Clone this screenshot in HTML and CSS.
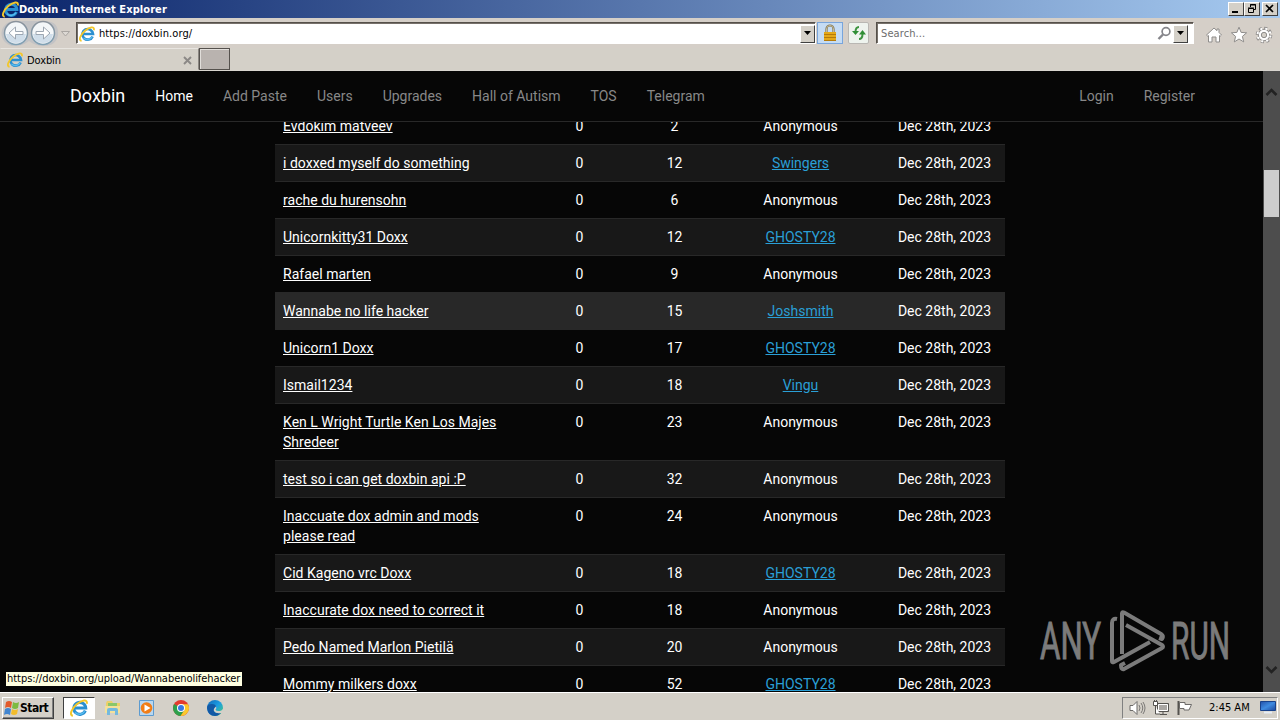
FILE: index.html
```
<!DOCTYPE html>
<html lang="en">
<head>
    <meta charset="UTF-8">
    <title>Doxbin - Internet Explorer</title>
    <link rel="stylesheet" href="styles.css">
</head>
<body>
    <svg class="defs" width="0" height="0">
        <linearGradient id="ring" x1="0" y1="0" x2="0" y2="1">
            <stop offset="0" stop-color="#8a929b"/>
            <stop offset="1" stop-color="#7fa0b4"/>
        </linearGradient>
        <linearGradient id="screen" x1="0" y1="0" x2="1" y2="1">
            <stop offset="0" stop-color="#2350a8"/>
            <stop offset="0.5" stop-color="#3f8be0"/>
            <stop offset="1" stop-color="#1c479c"/>
        </linearGradient>
        <linearGradient id="edge" x1="0" y1="0" x2="1" y2="1">
            <stop offset="0" stop-color="#1468b8"/>
            <stop offset="0.5" stop-color="#1b9de2"/>
            <stop offset="1" stop-color="#4fd26a"/>
        </linearGradient>
        <symbol id="ie" viewBox="0 0 16 16">
            <path d="M13.6 10.4a5.3 5.3 0 1 1 .4-2.4H4.4" fill="none" stroke="#2a8fd0" stroke-width="2.7"/>
            <path d="M13 10.9a5.3 5.3 0 0 1-8.5 1" fill="none" stroke="#58bdf0" stroke-width="1.3"/>
            <path d="M2.6 14.8C-1 14.5 1.5 8.5 6 4.7 10.5 1 15.8-.3 14.9 4.2" fill="none" stroke="#f3c72b" stroke-width="1.8"/>
        </symbol>
    </svg>

    <div class="titlebar">
        <svg width="17" height="17"><use href="#ie"/></svg>
        <span class="title-text">Doxbin - Internet Explorer</span>
        <div class="win-buttons">
            <span class="win-btn"><svg width="14" height="11"><path d="M3 8h6v2H3z"/></svg></span>
            <span class="win-btn"><svg width="14" height="11"><path d="M5.5 4V1.5h5v5H9M5 2h6M3.5 5.5h5v4h-5zM3 5h6" fill="none" stroke="#000"/></svg></span>
            <span class="win-btn close"><svg width="14" height="11"><path d="M3 2l7 7M10 2L3 9" stroke="#000" stroke-width="1.7"/></svg></span>
        </div>
    </div>

    <div class="toolbar">
        <svg class="nav-buttons" width="74" height="30">
            <path d="M14 3h31q14 0 13 14-2 11-14 11-9 0-15-5-6 5-15 5A12 12 0 0 1 14 3z" fill="#c3c3c5"/>
            <circle cx="16" cy="15" r="11.5" fill="#f3f6f8" stroke="url(#ring)" stroke-width="1.5"/>
            <circle cx="43" cy="15" r="11.5" fill="#f3f6f8" stroke="url(#ring)" stroke-width="1.5"/>
            <path d="M6 16h20q-1 9-10 9T6 16zM33 16h20q-1 9-10 9t-10-9z" fill="#d0deea"/>
            <path d="M15.5 9L9 15l6.5 6v-4.500H23v-3h-7.500zM43.500 9l6.500 6-6.500 6v-4.500H36v-3h7.500z" fill="#fff" stroke="#9da7b2"/>
            <path d="M61.500 13.500h8L65.500 18z" fill="#ddd9d4" stroke="#aaa6a2"/>
        </svg>
        <div class="field address">
            <svg width="16" height="16"><use href="#ie"/></svg>
            <span class="url">https://doxbin.org/</span>
            <span class="drop"><svg width="9" height="5"><path d="M1 0h7L4.500 4z"/></svg></span>
        </div>
        <span class="tool lock">
            <svg width="16" height="18">
                <path d="M4.500 9V5a3.500 3.500 0 0 1 7 0v4" fill="none" stroke="#7d7150" stroke-width="2.200"/>
                <path d="M4.500 9V5a3.500 3.500 0 0 1 7 0v4" fill="none" stroke="#d8cfa8" stroke-width=".8"/>
                <path d="M2 8h12v9H2z" fill="#e5a919"/>
                <path d="M2 10.500h12M2 13.500h12M2 16.500h12" stroke="#b57b0a"/>
            </svg>
        </span>
        <span class="tool refresh">
            <svg width="16" height="16">
                <path d="M8 2Q4.500 2 4.500 7M8 14q3.500 0 3.500-5" fill="none" stroke="#3d9440" stroke-width="2"/>
                <path d="M1 6h7l-3.500 4zM8 9.500h7L11.500 5z" fill="#2f8e35"/>
            </svg>
        </span>
        <div class="field search">
            <span class="placeholder">Search...</span>
            <svg width="15" height="15"><circle cx="9" cy="5.500" r="3.900" fill="none" stroke="#85858a" stroke-width="1.700"/><path d="M6 8.500L1.500 13" stroke="#85858a" stroke-width="2.400"/></svg>
            <span class="drop"><svg width="9" height="5"><path d="M1 0h7L4.500 4z"/></svg></span>
        </div>
        <div class="commands">
            <svg width="18" height="18"><path d="M1.500 9L9 2l3 2.700V3h2v3.500L16.500 9l-1.300 1.200-.7-.6V16H11v-5H7v5H3.500V9.600l-.7.600z" fill="#fff" stroke="#8f8d8b"/></svg>
            <svg width="18" height="18"><path d="M9 1.200l2.100 5.200 5.500.4-4.200 3.600 1.300 5.500L9 13l-4.700 2.900 1.300-5.500L1.400 6.800l5.500-.4z" fill="#fff" stroke="#8f8d8b"/></svg>
            <svg width="18" height="18"><circle cx="9" cy="9" r="6.800" fill="none" stroke="#8f8d8b" stroke-width="3" stroke-dasharray="3 2.340"/><circle cx="9" cy="9" r="5.700" fill="#fff" stroke="#8f8d8b"/><circle cx="9" cy="9" r="6.500" fill="none" stroke="#fff" stroke-width="2" stroke-dasharray="2 3.105" stroke-dashoffset="-.5"/><circle cx="9" cy="9" r="2.700" fill="#d4d0c8" stroke="#8f8d8b"/></svg>
        </div>
    </div>

    <div class="tabs">
        <div class="tab">
            <svg width="16" height="16"><use href="#ie"/></svg>
            <span>Doxbin</span>
            <svg class="tab-close" width="9" height="9"><path d="M1 1l7 7M8 1L1 8" stroke="#8b8886" stroke-width="1.900"/></svg>
        </div>
        <div class="new-tab"></div>
    </div>

    <div class="viewport">
        <div class="page">
            <nav class="navbar">
                <a class="brand">Doxbin</a>
                <a class="active">Home</a>
                <a>Add Paste</a>
                <a>Users</a>
                <a>Upgrades</a>
                <a>Hall of Autism</a>
                <a>TOS</a>
                <a>Telegram</a>
                <a class="right">Login</a>
                <a>Register</a>
            </nav>
            <table class="pastes">
                <colgroup>
                    <col class="col-title"><col class="col-comments"><col class="col-views"><col class="col-user"><col class="col-date">
                </colgroup>
                <tbody>
                    <tr><td><a>Evdokim matveev</a></td><td>0</td><td>2</td><td>Anonymous</td><td>Dec 28th, 2023</td></tr>
                    <tr><td><a>i doxxed myself do something</a></td><td>0</td><td>12</td><td><a class="user">Swingers</a></td><td>Dec 28th, 2023</td></tr>
                    <tr><td><a>rache du hurensohn</a></td><td>0</td><td>6</td><td>Anonymous</td><td>Dec 28th, 2023</td></tr>
                    <tr><td><a>Unicornkitty31 Doxx</a></td><td>0</td><td>12</td><td><a class="user">GHOSTY28</a></td><td>Dec 28th, 2023</td></tr>
                    <tr><td><a>Rafael marten</a></td><td>0</td><td>9</td><td>Anonymous</td><td>Dec 28th, 2023</td></tr>
                    <tr class="hover"><td><a>Wannabe no life hacker</a></td><td>0</td><td>15</td><td><a class="user">Joshsmith</a></td><td>Dec 28th, 2023</td></tr>
                    <tr><td><a>Unicorn1 Doxx</a></td><td>0</td><td>17</td><td><a class="user">GHOSTY28</a></td><td>Dec 28th, 2023</td></tr>
                    <tr><td><a>Ismail1234</a></td><td>0</td><td>18</td><td><a class="user">Vingu</a></td><td>Dec 28th, 2023</td></tr>
                    <tr><td><a>Ken L Wright Turtle Ken Los Majes<br>Shredeer</a></td><td>0</td><td>23</td><td>Anonymous</td><td>Dec 28th, 2023</td></tr>
                    <tr><td><a>test so i can get doxbin api :P</a></td><td>0</td><td>32</td><td>Anonymous</td><td>Dec 28th, 2023</td></tr>
                    <tr><td><a>Inaccuate dox admin and mods<br>please read</a></td><td>0</td><td>24</td><td>Anonymous</td><td>Dec 28th, 2023</td></tr>
                    <tr><td><a>Cid Kageno vrc Doxx</a></td><td>0</td><td>18</td><td><a class="user">GHOSTY28</a></td><td>Dec 28th, 2023</td></tr>
                    <tr><td><a>Inaccurate dox need to correct it</a></td><td>0</td><td>18</td><td>Anonymous</td><td>Dec 28th, 2023</td></tr>
                    <tr><td><a>Pedo Named Marlon Pietilä</a></td><td>0</td><td>20</td><td>Anonymous</td><td>Dec 28th, 2023</td></tr>
                    <tr><td><a>Mommy milkers doxx</a></td><td>0</td><td>52</td><td><a class="user">GHOSTY28</a></td><td>Dec 28th, 2023</td></tr>
                </tbody>
            </table>
        </div>
        <div class="scrollbar">
            <svg width="17" height="12"><path d="M3.500 9L8.500 4l5 5" fill="none" stroke="#222" stroke-width="2.600"/></svg>
            <div class="thumb"></div>
            <svg class="down" width="17" height="12"><path d="M3.500 3l5 5 5-5" fill="none" stroke="#222" stroke-width="2.600"/></svg>
        </div>
        <div class="status">https://doxbin.org/upload/Wannabenolifehacker</div>
        <div class="watermark">
            <svg width="206" height="68">
                <text x="2" y="50" textLength="61" lengthAdjust="spacingAndGlyphs">ANY</text>
                <text x="133" y="50" textLength="59" lengthAdjust="spacingAndGlyphs">RUN</text>
                <g fill="none" stroke="#7b7b7b" stroke-width="4" stroke-linejoin="round">
                    <path d="M84 45V4.500q0-2 2-1L123 25q3 2 1 5l-3-1"/>
                    <path d="M79 10q-5-1-5 4v38q0 2 2 1l36-20"/>
                    <path d="M88 16l36 20q2 2 0 3L86 60q-3 1-3-4l4-2"/>
                </g>
            </svg>
        </div>
    </div>

    <div class="taskbar">
        <div class="start">
            <svg width="17" height="16">
                <path d="M3 2q3-2 6 0L8 8Q5 6 2 8z" fill="#e25b2c"/>
                <path d="M10 2q3 2 6 0l-1 6q-3 2-6 0z" fill="#7dbb42"/>
                <path d="M2 9q3-2 6 0l-1 6q-3-2-6 0z" fill="#4286d0"/>
                <path d="M9 9q3 2 6 0l-1 5q-3 2-6 0z" fill="#f2bd2d"/>
            </svg>
            <span>Start</span>
        </div>
        <div class="task current"><svg width="18" height="18"><use href="#ie"/></svg></div>
        <div class="task">
            <svg width="18" height="18">
                <path d="M2 4l1-2h5l1 2h7v8H2z" fill="#ecd069"/>
                <path d="M4 4h9v3H4z" fill="#8ac76a"/>
                <path d="M1 7h15v7H1z" fill="#f4e19a"/>
                <path d="M3 16v-5q0-2 2-2h7q2 0 2 2v5h-3v-4H6v4z" fill="#74b9de"/>
            </svg>
        </div>
        <div class="task">
            <svg width="18" height="18">
                <path d="M1.500 1.500h14v15h-14z" fill="#b9d7ef" stroke="#5c9bd0"/>
                <circle cx="8.500" cy="9" r="5.800" fill="#f17d16"/>
                <path d="M6.500 5.500v7l6-3.500z" fill="#fff"/>
            </svg>
        </div>
        <div class="task">
            <svg width="18" height="18">
                <circle cx="9" cy="9" r="8" fill="#e33b2e"/>
                <path d="M9 9L2.100 5A8 8 0 0 0 8.500 17l4-6z" fill="#2da04c"/>
                <path d="M9 5.200h7A8 8 0 0 1 8.500 17l4-6z" fill="#fbc92d"/>
                <circle cx="9" cy="9" r="4" fill="#fff"/>
                <circle cx="9" cy="9" r="3" fill="#3979e2"/>
            </svg>
        </div>
        <div class="task">
            <svg width="18" height="18">
                <circle cx="9" cy="9" r="8" fill="url(#edge)"/>
                <path d="M1 9q0-4 5-4 4 0 4 3l-2 2q-1 4 4 4 2 0 3.500-1Q13 17 9 17 2 17 1 9z" fill="#1359a5"/>
                <path d="M10 7.500q1 2-.5 3 .5 2 4.500 1.500 2-.3 3-2l1 5-3-1q-5 1-7-2-1-2 2-4.500z" fill="#d4d0c8"/>
            </svg>
        </div>
        <div class="tray">
            <svg width="18" height="18"><path d="M2 6.500h3l4-4v13l-4-4H2z" fill="#fff" stroke="#6d6b69"/><path d="M11 6q2 3 0 6M13 4q3.500 5 0 10M15 3q4 6 0 12" fill="none" stroke="#7b7977"/></svg>
            <svg width="18" height="18"><path d="M5.500 4.500h11v8h-11z" fill="#aaa7a3" stroke="#55534f"/><path d="M6.500 5.500h9v6h-9z" fill="none" stroke="#fff"/><path d="M8 15.500h7M11 13v2" stroke="#55534f"/><path d="M1.500 2.500h4v4h-4zM3.500 7v8H8M2.500 1v2M4.500 1v2" fill="#fff" stroke="#55534f"/></svg>
            <svg width="18" height="18"><path d="M2.500 2v14" stroke="#55534f" stroke-width="2"/><path d="M3.500 3.500H9v2h6.500L13 11H8V9.500H3.500z" fill="#fff" stroke="#6d6b69"/></svg>
            <span class="clock">2:45 AM</span>
            <svg class="desktop" width="16" height="13"><path d="M.5.5h15v9H.5z" fill="url(#screen)" stroke="#19428b"/><path d="M4 11.500h8" stroke="#e6edf5" stroke-width="2"/></svg>
        </div>
    </div>
</body>
</html>
```

FILE: styles.css
```
* {
    box-sizing: border-box;
    margin: 0;
    padding: 0;
}
body {
    width: 1280px;
    height: 720px;
    overflow: hidden;
    display: flex;
    flex-direction: column;
    background: #d4d0c8;
    font-family: "DejaVu Sans Condensed", "DejaVu Sans", sans-serif;
    font-size: 11px;
    color: #000;
    white-space: nowrap;
}
svg {
    display: block;
    flex: none;
}
.defs {
    position: absolute;
}

/* window frame */
.titlebar {
    height: 18px;
    flex: none;
    display: flex;
    align-items: center;
    padding: 0 2px;
    background: linear-gradient(to right, #0a246a, #a6caf0);
    color: #fff;
    font-weight: bold;
}
.title-text {
    letter-spacing: 0.08px;
}
.win-buttons {
    margin-left: auto;
    display: flex;
}
.win-btn {
    width: 16px;
    height: 14px;
    background: #d4d0c8;
    border: 1px solid;
    border-color: #fff #404040 #404040 #fff;
}
.close {
    margin-left: 2px;
}
.toolbar {
    height: 30px;
    flex: none;
    display: flex;
    align-items: center;
    background: #d5cfc8;
}
.field {
    height: 22px;
    display: flex;
    align-items: center;
    background: #fff;
    border: 1px solid;
    border-color: #55504a #fff #fff #55504a;
    box-shadow: inset 1px 1px #77716b;
}
.nav-buttons {
    margin-right: 2px;
}
.address {
    width: 740px;
    padding: 1px 0 0 2px;
}
.url {
    margin-left: 4px;
    letter-spacing: 0.1px;
}
.drop {
    width: 15px;
    height: 18px;
    margin-left: auto;
    display: flex;
    align-items: center;
    justify-content: center;
    background: #d4d0c8;
    border: 1px solid;
    border-color: #fff #404040 #404040 #fff;
}
.tool {
    display: flex;
    align-items: center;
    justify-content: center;
    height: 22px;
}
.lock {
    width: 26px;
    margin-left: 1px;
    background: #c5dcf4;
    border: 1px solid #78a5dc;
}
.refresh {
    width: 21px;
    margin: 0 7px 0 5px;
    background: #eef3ee;
    border: 1px solid #b9b7b3;
    border-radius: 2px;
}
.search {
    width: 318px;
    padding: 1px 5px 0 4px;
}
.placeholder {
    margin-right: auto;
    color: #6d6d6d;
    letter-spacing: 0.1px;
}
.search .drop {
    margin-left: 1px;
}
.commands {
    display: flex;
    gap: 7px;
    margin: 3px 0 0 11px;
}

.tabs {
    height: 23px;
    flex: none;
    display: flex;
    border-bottom: 1px solid #d8d5cf;
}
.tab {
    width: 199px;
    display: flex;
    align-items: center;
    padding: 2px 6px 0 6px;
    border: 1px solid;
    border-color: #e8e5e0 #8b8782 transparent transparent;
}
.tab span {
    margin-left: 4px;
    letter-spacing: -0.1px;
}
.tab-close {
    margin-left: auto;
}
.new-tab {
    width: 31px;
    height: 22px;
    background: #b9b3af;
    border: 1px solid #55514d;
    box-shadow: inset 1px 1px #e1deda;
}

/* web page */
.viewport {
    position: relative;
    height: 621px;
    flex: none;
    display: flex;
    overflow: hidden;
    background: #060606;
}
.page {
    width: 1263px;
    font-family: Roboto, sans-serif;
    font-size: 14px;
    line-height: 20px;
    color: #fff;
}
.navbar {
    position: relative;
    z-index: 1;
    height: 51px;
    display: flex;
    align-items: center;
    padding: 0 53px 0 55px;
    background: #060606;
    border-bottom: 1px solid #282828;
}
.navbar a {
    padding: 0 15px;
    color: #888;
}
.navbar .brand {
    font-size: 18px;
    color: #fff;
}
.navbar .active {
    color: #fff;
}
.navbar .right {
    margin-left: auto;
}
.pastes {
    width: 730px;
    margin: -15px 0 0 275px;
    table-layout: fixed;
    border-spacing: 0;
    text-align: center;
}
.col-title {
    width: 252px;
}
.col-comments {
    width: 105px;
}
.col-views {
    width: 85px;
}
.col-user {
    width: 167px;
}
.col-date {
    width: 121px;
}
.pastes td {
    padding: 8px;
    vertical-align: top;
    border-top: 1px solid #282828;
}
.pastes td:first-child {
    text-align: left;
    letter-spacing: 0.02px;
}
.pastes tr:nth-child(even) {
    background: #181818;
}
.pastes tr.hover {
    background: #282828;
}
.pastes a {
    color: #fff;
    text-decoration: underline;
}
.pastes .user {
    color: #2a9fd6;
}
.scrollbar {
    width: 17px;
    display: flex;
    flex-direction: column;
    padding: 15px 0 16px;
    background: #4d4d4d;
}
.thumb {
    width: 15px;
    height: 47px;
    margin: 72px 0 0 1px;
    background: #cdcdcd;
}
.down {
    margin-top: auto;
}
.status {
    position: absolute;
    left: 6px;
    bottom: 6px;
    width: 236px;
    height: 14px;
    padding-left: 1px;
    line-height: 14px;
    letter-spacing: -0.04px;
    background: #ffffe1;
}
.watermark {
    position: absolute;
    left: 1038px;
    top: 538px;
}
.watermark text {
    font-family: Roboto, sans-serif;
    font-size: 52px;
    fill: #7b7b7b;
    stroke: #7b7b7b;
    stroke-width: 1px;
}

/* taskbar */
.taskbar {
    height: 28px;
    flex: none;
    display: flex;
    align-items: center;
    padding: 2px 2px 0;
    border-top: 1px solid #fff;
    background: #d4d0c8;
}
.start {
    width: 52px;
    height: 22px;
    display: flex;
    align-items: center;
    border: 1px solid;
    border-color: #fff #404040 #404040 #fff;
    box-shadow: inset -1px -1px #808080;
    font-weight: bold;
}
.start span {
    font-size: 12px;
    letter-spacing: -0.5px;
}
.task {
    width: 34px;
    height: 22px;
    display: flex;
    align-items: center;
    justify-content: center;
}
.current {
    width: 32px;
    margin: 0 1px 0 9px;
    background: #fff;
    border: 1px solid;
    border-color: #404040 #fff #fff #404040;
}
.tray {
    width: 156px;
    height: 22px;
    margin-left: auto;
    display: flex;
    align-items: center;
    gap: 6px;
    padding: 0 1px 0 5px;
    border: 1px solid;
    border-color: #808080 #fff #fff #808080;
}
.clock {
    margin-left: 9px;
}
.desktop {
    margin-left: auto;
}
```
